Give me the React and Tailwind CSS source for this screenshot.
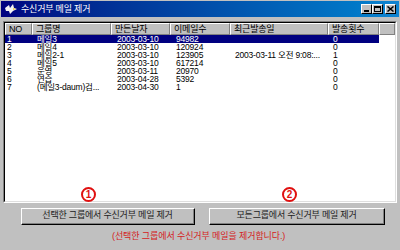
import React from 'react';

const rows = [
  { no: '1', name: '메일3', date: '2003-03-10', count: '94982', last: '', sent: '0' },
  { no: '2', name: '메일4', date: '2003-03-10', count: '120924', last: '', sent: '0' },
  { no: '3', name: '메일2-1', date: '2003-03-10', count: '123905', last: '2003-03-11 오전 9:08:...', sent: '1' },
  { no: '4', name: '메일5', date: '2003-03-10', count: '617214', last: '', sent: '0' },
  { no: '5', name: '운영', date: '2003-03-11', count: '20970', last: '', sent: '0' },
  { no: '6', name: '연습', date: '2003-04-28', count: '5392', last: '', sent: '0' },
  { no: '7', name: '(메일3-daum)검...', date: '2003-04-30', count: '1', last: '', sent: '0' },
];

const columns = [
  { key: 'no', label: 'NO', w: 'w-[27px]', pad: 'pl-[2px]' },
  { key: 'name', label: '그룹명', w: 'w-[79px]', pad: 'pl-[5px]' },
  { key: 'date', label: '만든날자', w: 'w-[59px]', pad: 'pl-[6px]' },
  { key: 'count', label: '이메일수', w: 'w-[60px]', pad: 'pl-[6px]' },
  { key: 'last', label: '최근발송일', w: 'w-[98px]', pad: 'pl-[5px]' },
  { key: 'sent', label: '발송횟수', w: 'w-[51px]', pad: 'pl-[5px]' },
];

const font = { fontFamily: '"Liberation Sans", "Noto Sans CJK KR", sans-serif' };

// caption buttons of the title bar
const CaptionButton = ({ children }) => (
  <div className="w-[11px] h-[10px] bg-[#c0c0c0] border border-t-white border-l-white border-b-black border-r-black flex items-center justify-center">
    {children}
  </div>
);

const Circled = ({ n, className }) => (
  <div className={`absolute w-[15px] h-[15px] rounded-full border-2 border-[#e01010] flex items-center justify-center text-[10px] font-bold leading-none text-[#e01010] ${className}`}>
    {n}
  </div>
);

const Button = ({ children, w }) => (
  <div className={`${w} h-[17px] bg-[#c0c0c0] border border-t-white border-l-white border-b-black border-r-black`}>
    <div className="w-full h-full border-b border-r border-b-[#808080] border-r-[#808080] flex items-center justify-center text-[9px] tracking-[-0.2px] text-[#222]">
      {children}
    </div>
  </div>
);

export default function App() {
  return (
    <div className="relative w-[400px] h-[250px] bg-[#c0c0c0] overflow-hidden select-none" style={font}>
      {/* title bar */}
      <div className="mx-[1px] mt-[1px] h-[16px] bg-gradient-to-r from-[#000080] to-[#1084d0] flex items-center">
        <svg width="14" height="12" viewBox="0 0 14 12" className="ml-[3px]">
          <path d="M1 5 L5 2 L6 5 L9 1 L10 5 L13 6 L9 8 L6 11 L5 8 L2 8 Z" fill="#f4f4f4" />
          <path d="M9 5 L12 6 L9 7 Z" fill="#f0d040" />
        </svg>
        <span className="ml-[3px] text-[9px] tracking-[-0.2px] text-white leading-none">수신거부 메일 제거</span>
        <div className="ml-auto mr-[3px] flex items-center">
          <CaptionButton>
            <div className="w-[5px] h-[2px] bg-black mt-[4px] -ml-[1px]" />
          </CaptionButton>
          <CaptionButton>
            <div className="w-[7px] h-[6px] border border-black border-t-2" />
          </CaptionButton>
          <div className="ml-[2px]">
            <CaptionButton>
              <svg width="7" height="6" viewBox="0 0 7 6">
                <path d="M0.5 0.5 L6.5 5.5 M6.5 0.5 L0.5 5.5" stroke="#000" strokeWidth="1.5" />
              </svg>
            </CaptionButton>
          </div>
        </div>
      </div>

      {/* list view */}
      <div className="ml-[3px] mr-[3px] mt-[4px] h-[182px] border border-t-[#808080] border-l-[#808080] border-b-white border-r-white">
        <div className="w-full h-full bg-white border border-t-black border-l-black border-b-[#dfdfdf] border-r-[#dfdfdf] overflow-hidden">
          <div className="flex h-[12px] text-[9px] tracking-[-0.2px] text-black">
            {columns.map((c) => (
              <div
                key={c.key}
                className={`${c.w} shrink-0 bg-[#c0c0c0] border border-t-white border-l-white border-b-[#808080] border-r-[#808080] pl-[3px] flex items-center leading-none`}
              >
                {c.label}
              </div>
            ))}
            <div className="flex-1 bg-[#c0c0c0] border border-t-white border-l-white border-b-[#808080] border-r-[#808080]" />
          </div>
          {rows.map((r, i) => (
            <div
              key={r.no}
              className={`flex h-[8px] w-[374px] text-[8.5px] tracking-[-0.2px] leading-[8px] ${i === 0 ? 'bg-[#000080] text-white' : 'text-black'}`}
            >
              {columns.map((c) => (
                <div key={c.key} className={`${c.w} ${c.pad} shrink-0 whitespace-nowrap`}>
                  {r[c.key]}
                </div>
              ))}
            </div>
          ))}
        </div>
      </div>

      {/* buttons */}
      <div className="flex mt-[5px] pl-[21px] gap-[14px]">
        <Button w="w-[174px]">선택한 그룹에서 수신거부 메일 제거</Button>
        <Button w="w-[176px]">모든그룹에서 수신거부 메일 제거</Button>
      </div>

      <div className="mt-[6px] pl-[112px] h-[10px] flex items-center text-[9px] tracking-[-0.1px] text-[#d42020] leading-none">
        (선택한 그룹에서 수신거부 메일을 제거합니다.)
      </div>

      <Circled n="1" className="left-[81px] top-[187px]" />
      <Circled n="2" className="left-[282px] top-[187px]" />
    </div>
  );
}
